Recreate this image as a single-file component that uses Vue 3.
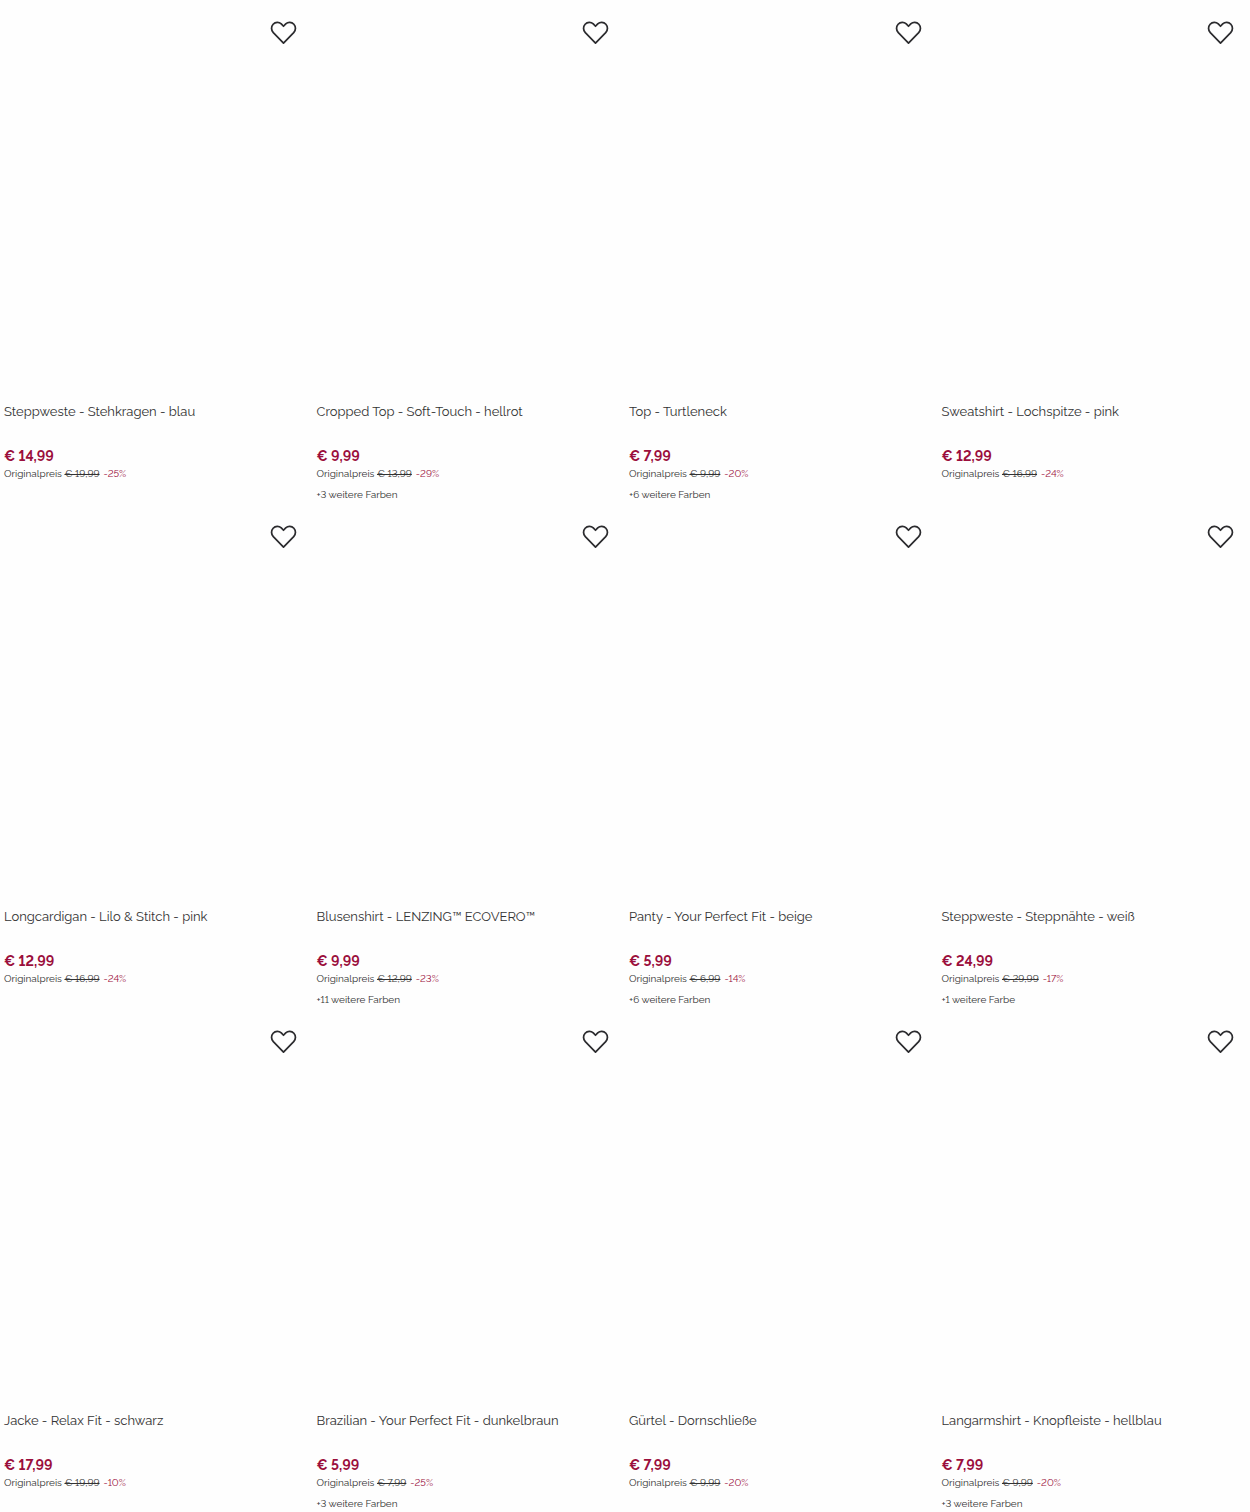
<template>
  <main class="product-grid">
    <article v-for="product in products" :key="product.name" class="product">
      <div class="product__media">
        <button
          type="button"
          class="product__wish"
          :aria-label="`${product.name} merken`"
          :aria-pressed="wishlist.includes(product.name)"
          @click="toggleWish(product.name)"
        >
          <svg viewBox="0 0 28 26" width="27" height="25" aria-hidden="true">
            <path
              d="M14 24 3.4 13.1C1 10.6 1 6.8 3.2 4.4 5.6 1.8 9.3 1.8 11.7 4.1L14 6.5 16.3 4.1C18.7 1.8 22.4 1.8 24.8 4.4 27 6.8 27 10.6 24.6 13.1Z"
            />
          </svg>
        </button>
      </div>
      <h2 class="product__name">
        <a href="#">{{ product.name }}</a>
      </h2>
      <p class="product__price">€ {{ product.price }}</p>
      <p class="product__original">
        Originalpreis <s>€ {{ product.original }}</s>
        <span class="product__discount">-{{ product.discount }}%</span>
      </p>
      <p v-if="product.colors" class="product__colors">
        +{{ product.colors }} weitere {{ product.colors === 1 ? 'Farbe' : 'Farben' }}
      </p>
    </article>
  </main>
</template>

<script setup>
import { ref } from 'vue'

const products = [
  { name: 'Steppweste - Stehkragen - blau', price: '14,99', original: '19,99', discount: 25 },
  { name: 'Cropped Top - Soft-Touch - hellrot', price: '9,99', original: '13,99', discount: 29, colors: 3 },
  { name: 'Top - Turtleneck', price: '7,99', original: '9,99', discount: 20, colors: 6 },
  { name: 'Sweatshirt - Lochspitze - pink', price: '12,99', original: '16,99', discount: 24 },
  { name: 'Longcardigan - Lilo & Stitch - pink', price: '12,99', original: '16,99', discount: 24 },
  { name: 'Blusenshirt - LENZING™ ECOVERO™', price: '9,99', original: '12,99', discount: 23, colors: 11 },
  { name: 'Panty - Your Perfect Fit - beige', price: '5,99', original: '6,99', discount: 14, colors: 6 },
  { name: 'Steppweste - Steppnähte - weiß', price: '24,99', original: '29,99', discount: 17, colors: 1 },
  { name: 'Jacke - Relax Fit - schwarz', price: '17,99', original: '19,99', discount: 10 },
  { name: 'Brazilian - Your Perfect Fit - dunkelbraun', price: '5,99', original: '7,99', discount: 25, colors: 3 },
  { name: 'Gürtel - Dornschließe', price: '7,99', original: '9,99', discount: 20 },
  { name: 'Langarmshirt - Knopfleiste - hellblau', price: '7,99', original: '9,99', discount: 20, colors: 3 }
]

const wishlist = ref([])

function toggleWish(name) {
  wishlist.value = wishlist.value.includes(name)
    ? wishlist.value.filter((item) => item !== name)
    : [...wishlist.value, name]
}
</script>

<style>
body {
  margin: 0;
  background: #fefefe;
}
</style>

<style scoped>
.product-grid {
  display: grid;
  grid-template-columns: repeat(4, minmax(0, 1fr));
  color: #333;
  font-family: Raleway, Lato, 'Liberation Sans', sans-serif;
  font-variant-numeric: lining-nums;
}

.product {
  padding: 0 4px;
}

.product__media {
  display: flex;
  align-items: flex-start;
  justify-content: flex-end;
  box-sizing: border-box;
  aspect-ratio: 151 / 200;
  padding: 20px 12px 0 0;
}

.product__wish {
  display: flex;
  padding: 0;
  border: 0;
  background: transparent;
  cursor: pointer;
}

.product__wish path {
  fill: none;
  stroke: #2b2b2e;
  stroke-width: 1.8;
  stroke-linejoin: round;
}

.product__wish[aria-pressed='true'] path {
  fill: #9b0f3c;
}

.product__name {
  height: 44px;
  margin: 0;
  font-size: 13px;
  font-weight: 400;
  line-height: 18px;
}

.product__name a {
  color: inherit;
  text-decoration: none;
}

.product__price {
  margin: 0;
  color: #9b0f3c;
  font-size: 14px;
  font-weight: 700;
  line-height: 18px;
}

.product__original {
  margin: 0;
  font-size: 10px;
  line-height: 18px;
}

.product__discount {
  margin-left: 4px;
  color: #9b0f3c;
}

.product__colors {
  margin: 3px 0 0;
  font-size: 10px;
  line-height: 18px;
}
</style>
